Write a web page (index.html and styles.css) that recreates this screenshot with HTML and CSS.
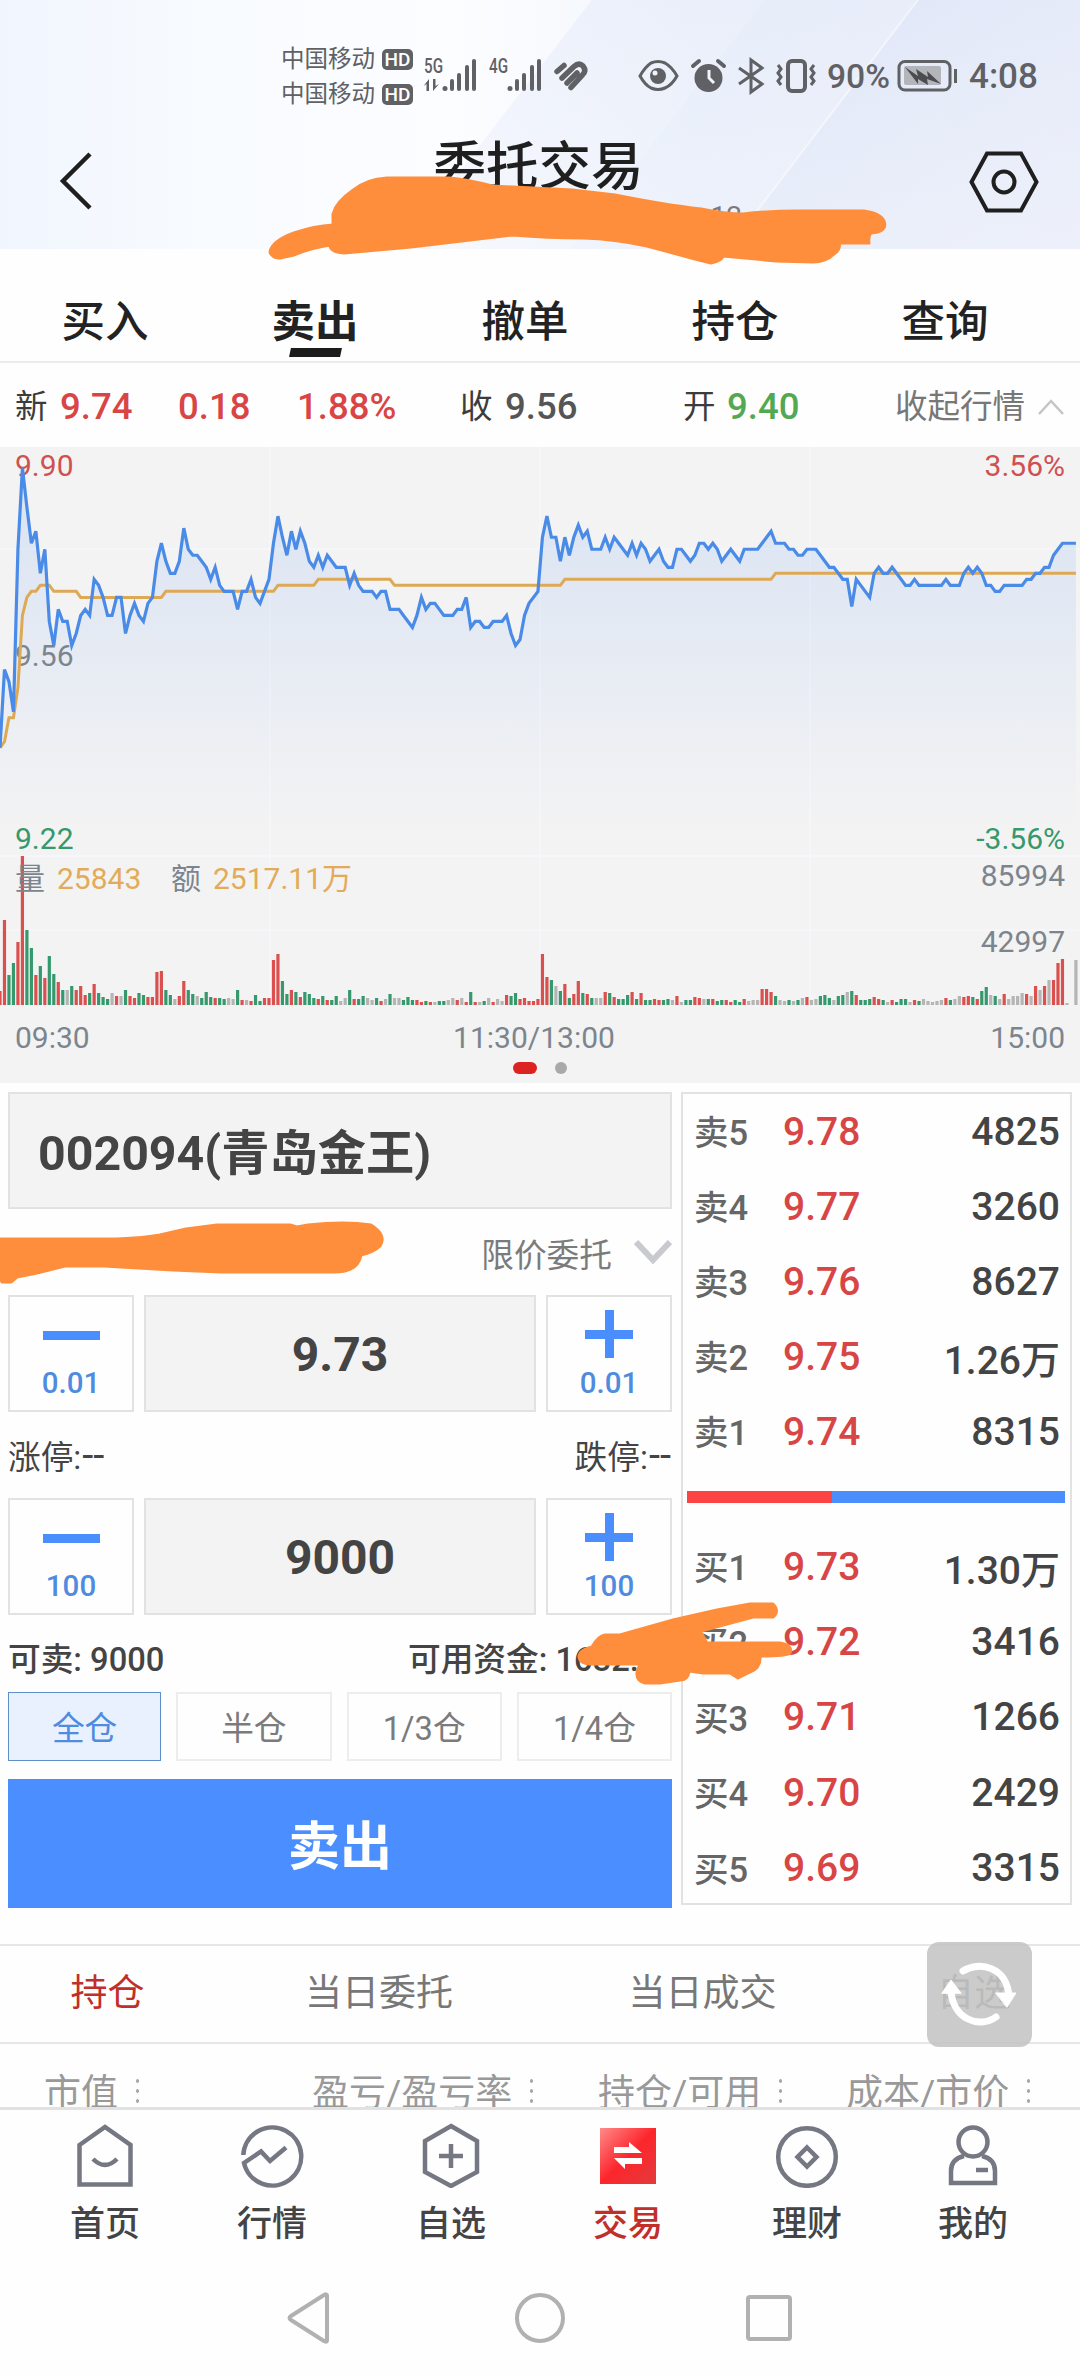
FILE: index.html
```html
<!DOCTYPE html>
<html lang="zh-CN">
<head>
  <meta charset="UTF-8">
  <meta name="viewport" content="width=device-width, initial-scale=1.0">
  <title>委托交易</title>
  <link rel="stylesheet" href="styles.css">
</head>
<body>
  <header class="header">
    <svg class="header-bg" viewBox="0 0 1080 249" preserveAspectRatio="none">
      <defs>
        <linearGradient id="sky" x1="0" y1="0" x2="1" y2="0">
          <stop offset="0" stop-color="#f1f6fe"/>
          <stop offset="0.2" stop-color="#f8fbff"/>
          <stop offset="0.42" stop-color="#fcfdff"/>
          <stop offset="0.65" stop-color="#f1f5fc"/>
          <stop offset="1" stop-color="#eef1fb"/>
        </linearGradient>
        <linearGradient id="beam" x1="0" y1="0" x2="1" y2="1">
          <stop offset="0" stop-color="#d5def6" stop-opacity="0.6"/>
          <stop offset="1" stop-color="#e6ebf9" stop-opacity="0.1"/>
        </linearGradient>
      </defs>
      <rect width="1080" height="249" fill="url(#sky)"/>
      <polygon points="592,0 1080,0 1080,249 400,249" fill="url(#beam)" opacity="0.6"/>
      <polygon points="765,0 1080,0 1080,249 570,249" fill="url(#beam)" opacity="0.3"/>
      <polygon points="918,0 1080,0 1080,249 728,249" fill="url(#beam)" opacity="0.9"/>
      <line x1="918" y1="0" x2="728" y2="249" stroke="#fff" stroke-width="2" opacity="0.5"/>
    </svg>

    <div class="status">
      <div class="carriers">
        <div class="carrier">中国移动<span class="hd">HD</span></div>
        <div class="carrier">中国移动<span class="hd">HD</span></div>
      </div>
      <svg class="status-icons" width="170" height="36" viewBox="422 58 170 36" fill="#5f6164">
        <text x="424" y="73" class="net" textLength="19" lengthAdjust="spacingAndGlyphs">5G</text>
        <path d="M429 79v12h-2.500v-7l-3 2zM433 91V79h2.500v7l3.500-2z"/>
        <g id="bars">
          <circle cx="445" cy="88.500" r="2.500"/>
          <rect x="450" y="79" width="4" height="12" rx="2"/>
          <rect x="457" y="73" width="4" height="18" rx="2"/>
          <rect x="465" y="65" width="4" height="26" rx="2"/>
          <rect x="472" y="59" width="4" height="32" rx="2"/>
        </g>
        <text x="489" y="73" class="net" textLength="19" lengthAdjust="spacingAndGlyphs">4G</text>
        <use href="#bars" x="65"/>
        <g stroke="#5f6164" stroke-width="5.500" stroke-linecap="round" stroke-linejoin="round" fill="none">
          <path d="M557 71.500L564 65.500M562 78L574 66.500Q579 62 583 66Q587 71 582 75.500L571 87.500M567 83L577 73"/>
        </g>
      </svg>
      <svg class="status-icons right" width="322" height="36" viewBox="637 58 322 36" fill="none" stroke="#5f6164" stroke-width="3">
        <path d="M640 76q5-9 11-13q7-3 14 0q7 4 12 13q-5 9-12 12q-7 3-14 0q-6-3-11-12z"/>
        <circle cx="658" cy="76" r="8" fill="#5f6164" stroke="none"/>
        <circle cx="655" cy="73" r="2.500" fill="#f1f4fb" stroke="none"/>
        <circle cx="708.500" cy="78" r="14" fill="#5f6164" stroke="none"/>
        <path d="M693 66l6-5M724 66l-6-5" stroke-width="4" stroke-linecap="round"/>
        <path d="M709 70v8l5 5" stroke="#f1f4fb"/>
        <path d="M739 68l23 16l-11 8V60l11 8l-23 16"/>
        <rect x="788" y="61" width="17" height="30" rx="4" stroke-width="4"/>
        <path d="M778 65l3 4l-3 4l3 4l-3 4l3 4M814 65l-3 4l3 4l-3 4l3 4l-3 4"/>
        <text x="827" y="88" class="battery-text" textLength="63" lengthAdjust="spacingAndGlyphs">90%</text>
        <rect x="899" y="61.500" width="51" height="28.500" rx="6"/>
        <rect x="904" y="66" width="37" height="19" rx="2" fill="#b3b5bb" stroke="none"/>
        <path d="M905 67l13 9l-2-7l12 8l-1-6l14 13l-14-5l1 6l-10-6l0 5z" fill="#4c4d50" stroke="none"/>
        <path d="M955.500 69v14"/>
      </svg>
      <span class="clock">4:08</span>
    </div>

    <div class="titlebar">
      <svg class="back" width="36" height="60" viewBox="0 0 36 60" fill="none" stroke="#1f1f1f" stroke-width="4.500">
        <path d="M32 3L5 30l27 27"/>
      </svg>
      <div class="title">
        <h1>委托交易</h1>
        <p>12</p>
      </div>
      <svg width="70" height="62" viewBox="0 0 70 62" fill="none" stroke="#1f1f1f" stroke-width="4">
        <path d="M18 2.500h34L67.500 31L52 59.500H18L2.500 31z"/>
        <circle cx="35" cy="31" r="10.500"/>
      </svg>
    </div>
  </header>

  <nav class="tabs">
    <a>买入</a>
    <a class="on">卖出</a>
    <a>撤单</a>
    <a>持仓</a>
    <a>查询</a>
  </nav>

  <section class="quote">
    <span>新</span><b class="red">9.74</b>
    <b class="red">0.18</b><b class="red">1.88%</b>
    <span>收</span><b>9.56</b>
    <span>开</span><b class="green">9.40</b>
    <span class="fold">收起行情</span>
    <svg width="26" height="16" viewBox="0 0 26 16" fill="none" stroke="#c4c4c4" stroke-width="2.500"><path d="M1 15L13 2l12 13"/></svg>
  </section>

  <section class="chart">
    <svg id="chart" width="1080" height="636" viewBox="0 447 1080 636">
      <defs>
        <linearGradient id="area" gradientUnits="userSpaceOnUse" x1="0" y1="480" x2="0" y2="830">
          <stop offset="0" stop-color="#4a8bf7" stop-opacity="0.15"/>
          <stop offset="1" stop-color="#4a8bf7" stop-opacity="0"/>
        </linearGradient>
      </defs>
      <path d="M270 447V1005M540 447V1005M810 447V1005M0 549H1080M0 856H1080M0 930H1080" stroke="#f5f6f9" stroke-width="2"/>
      <path id="fill" fill="url(#area)"/>
      <g id="volume"></g>
      <g class="axis">
        <text x="15" y="476" class="up">9.90</text>
        <text x="1065" y="476" class="up end">3.56%</text>
        <text x="15" y="666">9.56</text>
        <text x="15" y="849" class="down">9.22</text>
        <text x="1065" y="849" class="down end">-3.56%</text>
        <text x="15" y="889">量</text>
        <text x="57" y="889" class="amt">25843</text>
        <text x="171" y="889">额</text>
        <text x="213" y="889" class="amt">2517.11万</text>
        <text x="1065" y="886" class="end">85994</text>
        <text x="1065" y="952" class="end">42997</text>
        <text x="15" y="1048">09:30</text>
        <text x="534" y="1048" class="mid">11:30/13:00</text>
        <text x="1065" y="1048" class="end">15:00</text>
      </g>
      <polyline id="avg" fill="none" stroke="#dda954" stroke-width="3"/>
      <polyline id="price" fill="none" stroke="#4a8be8" stroke-width="3.200"/>
      <rect x="513" y="1062" width="24" height="12" rx="6" fill="#dd2222"/>
      <circle cx="561" cy="1068" r="6" fill="#a9a9a9"/>
    </svg>
  </section>

  <main class="trade">
    <div class="form">
      <div class="box stock">002094(青岛金王)</div>
      <div class="kind">
        <span>限价委托</span>
        <svg width="38" height="24" viewBox="0 0 38 24" fill="none" stroke="#c9cad0" stroke-width="6"><path d="M2 2l17 18L36 2"/></svg>
      </div>
      <div class="stepper">
        <button><i class="minus"></i>0.01</button>
        <div class="box">9.73</div>
        <button><i class="plus"></i>0.01</button>
      </div>
      <div class="line limits"><span>涨停:<u>--</u></span><span>跌停:<u>--</u></span></div>
      <div class="stepper">
        <button><i class="minus"></i>100</button>
        <div class="box">9000</div>
        <button><i class="plus"></i>100</button>
      </div>
      <div class="line funds"><span>可卖: 9000</span><span class="cash">可用资金: 1632.</span></div>
      <div class="quick">
        <button class="on">全仓</button>
        <button>半仓</button>
        <button>1/3仓</button>
        <button>1/4仓</button>
      </div>
      <button class="sell">卖出</button>
    </div>

    <div class="book">
      <div class="row"><span>卖5</span><b>9.78</b><em>4825</em></div>
      <div class="row"><span>卖4</span><b>9.77</b><em>3260</em></div>
      <div class="row"><span>卖3</span><b>9.76</b><em>8627</em></div>
      <div class="row"><span>卖2</span><b>9.75</b><em>1.26万</em></div>
      <div class="row"><span>卖1</span><b>9.74</b><em>8315</em></div>
      <div class="ratio"></div>
      <div class="row buy"><span>买1</span><b>9.73</b><em>1.30万</em></div>
      <div class="row buy"><span>买2</span><b>9.72</b><em>3416</em></div>
      <div class="row buy"><span>买3</span><b>9.71</b><em>1266</em></div>
      <div class="row buy"><span>买4</span><b>9.70</b><em>2429</em></div>
      <div class="row buy"><span>买5</span><b>9.69</b><em>3315</em></div>
    </div>
  </main>

  <section class="lists">
    <div class="subtabs">
      <span class="on">持仓</span><span>当日委托</span><span>当日成交</span><span>自选</span>
      <div class="refresh">
        <svg width="105" height="105" viewBox="0 0 105 105" fill="none" stroke="#fff" stroke-width="7" stroke-linecap="round">
          <path d="M36 29C52 19 80 24 82 55"/>
          <path d="M69 75C52 87 26 77 24 49"/>
          <path d="M69 51l20 0l-9 14zM15 51l9-13l10 13z" fill="#fff" stroke-width="1"/>
        </svg>
      </div>
    </div>
    <div class="cols">
      <span>市值<i></i></span><span>盈亏/盈亏率<i></i></span><span>持仓/可用<i></i></span><span>成本/市价<i></i></span>
    </div>
  </section>

  <nav class="bottom">
    <a>
      <svg width="64" height="66" viewBox="0 0 64 66"><path d="M6.500 23L32 5l25.500 18v39.500h-51zM20 37q12 12 24 0"/></svg>
      首页
    </a>
    <a>
      <svg width="64" height="66" viewBox="0 0 64 66"><path d="M3.300 33A29 29 0 1 1 4 41L21 29.500l9 9.500L46 25.500"/></svg>
      行情
    </a>
    <a>
      <svg width="64" height="66" viewBox="0 0 64 66"><path d="M32 4l26 15v31L32 64L6 50V19zM32 22v24M20 34h24"/></svg>
      自选
    </a>
    <a class="on">
      <svg width="64" height="66" viewBox="0 0 64 66">
        <defs><linearGradient id="deal" x1="0" y1="0" x2="1" y2="1"><stop offset="0" stop-color="#ff8a8a"/><stop offset="0.500" stop-color="#fc262c"/><stop offset="1" stop-color="#e23b3b"/></linearGradient></defs>
        <rect x="4" y="6" width="56" height="56" fill="url(#deal)" stroke="none"/>
        <path d="M18 25h15v-5l13 11H18zM46 36H18l11 11v-5h17z" fill="#fff" stroke="none"/>
      </svg>
      交易
    </a>
    <a>
      <svg width="64" height="66" viewBox="0 0 64 66"><circle cx="32" cy="35" r="28.800"/><path d="M32 25.500l9.500 9.500l-9.500 9.500l-9.500-9.500z"/></svg>
      理财
    </a>
    <a>
      <svg width="64" height="66" viewBox="0 0 64 66"><circle cx="32" cy="20" r="14.500"/><path d="M23 34Q10 37 10 49v12h44V49Q54 37 41 34M35 48h12"/></svg>
      我的
    </a>
  </nav>

  <div class="sysnav">
    <svg width="1080" height="60" viewBox="0 0 1080 60" fill="none" stroke="#b1b1b1" stroke-width="4" stroke-linejoin="round">
      <path d="M327 7.500v45q0 2-3 0.500L291 32q-3-2 0-4L324 7q3-1.500 3 0.500z"/>
      <circle cx="540" cy="30" r="23"/>
      <rect x="748" y="9" width="42" height="42" rx="2"/>
    </svg>
  </div>

  <!-- marker strokes hiding account details -->
  <svg class="marker" width="1080" height="2376" viewBox="0 0 1080 2376">
    <path d="M270 252Q272 241 294 233Q314 226 333 225V214Q336 202 352 191Q366 179 387 178H449Q470 180 492 186L572 190L615 195Q665 205 701 209Q725 214 743 214Q770 211 797 211H864Q880 213 884 221Q888 232 871 233Q868 236 869 243H839Q841 249 834 254Q826 262 813 262L776 261L723 256Q722 261 711 263L695 259L647 246Q615 239 583 238Q547 238 513 235L411 247L344 253Q330 252 330 245Q310 248 294 255L280 258Q272 258 270 252z"/>
    <path d="M-4 1239L117 1239Q145 1238 160 1235L186 1229L217 1225H290L297 1227L308 1225Q345 1221 371 1225Q387 1235 380 1246Q374 1252 361 1255Q358 1272 334 1272H221L173 1270L104 1266H65L37 1273L17 1277L11 1282H2L-4 1270z"/>
    <path d="M579 1657Q579 1650 592 1647Q598 1636 605 1635H620L673 1620L717 1610L750 1604H773Q780 1611 773 1617H753L701 1631Q703 1637 707 1643H780Q793 1645 790 1653Q786 1656 760 1656Q761 1668 750 1672L738 1678L730 1673H703L689 1671Q688 1680 680 1680L660 1683H645Q636 1681 637 1672L640 1664H592Q580 1664 579 1657z"/>
  </svg>

  <script>
    const STEP = 4.483;   // px per minute
    const xAt = i => i * STEP;
    const yAt = c => 447 + (990 - c) * 6.015;

    // price per minute, in cents
    const prices = (
      '940 953 951 946 973 986.5 980 974 976 969 973 961 957 963 961 961 957 959 962 963 ' +
      '962 968 967 965 962 962 965 965 959 962 964 962 961 964 965 971 974 971 969 969 ' +
      '971 976.5 973 972 972 971 970 968 970 967 966 966 966 963 966 966 968 965 964 966 ' +
      '968 974 978.5 975 972 976 973 976 974 971 970 972 970 972 971 970 970 970 967 969 ' +
      '967 966 966 966 965 966 966 963 963 963 962 961 960 962 965 963 964 964 963 962 ' +
      '962 962 963 963 965 960 961 961 960 960 961 961 961 962 959 957 958 962 964 965 ' +
      '966 975 978.5 975 975 971 975 972 975 977 975 976 973 973 973 975 973 975 974 973 ' +
      '972 974 972 974 973 971 972 973 971 970 970 973 973 972 971 972 974 974 973 974 ' +
      '973 971 972 973 972 971 973 973 973 973 974 975 976 974 974 974 973 973 972 972 ' +
      '973 973 973 972 971 970 970 969 968 968 963.5 968 967 966 965 969 970 969 969 970 ' +
      '969 968 967 967 968 967 967 967 967 967 967 968 967 967 967 969 970 969 970 969 ' +
      '967 967 966 966 967 967 967 967 967 968 968 969 969 970 970 972 973 974 974 974 974'
    ).split(' ').map(Number);

    // average line: [minute, cents]
    const avg = [[0,940],[1,941],[2,945],[3,945],[4,950],[5,962],[6,965],[7,966],[8,966],[9,967],[11,967],
      [12,966],[17,966],[18,965],[36,965],[37,966],[61,966],[62,967],[70,967],[71,968],[87,968],
      [88,967],[125,967],[126,968],[172,968],[173,969],[240,969]];

    // volume bars: r up, g down, n flat + height
    const volume = (
      'r14 r85 g30 g42 r63 r149 g75 g57 r30 g39 r27 g49 g31 r23 g15 n15 g19 r15 r19 r10 ' +
      'g12 r21 g12 g8 g6 n12 r9 n9 g15 r9 r7 g12 g10 r8 r8 r33 r34 g15 g10 n6 ' +
      'r9 r24 g15 g11 n9 g7 g13 g8 r7 g7 g6 n7 n6 g15 r5 n5 r4 g10 g4 r7 ' +
      'r7 r45 r51 g24 g11 r15 g13 r8 g13 g11 g7 r6 g9 r5 g5 g9 n4 n7 g15 r6 ' +
      'g6 g9 n7 n5 g7 r4 n6 g11 n7 n7 g5 g8 g5 r5 r3 g4 r3 n3 g4 g4 ' +
      'n5 n7 r5 n7 r3 g13 r3 n3 g4 n7 r3 n6 n4 r10 g9 g12 r6 r7 r4 r4 ' +
      'r6 r51 r28 g25 n19 g14 r21 g7 r11 r24 g12 r11 g7 n7 n7 r13 g12 r8 g6 g6 ' +
      'g10 r13 g6 r12 g5 g5 r6 r5 g5 g6 n5 r9 n3 g5 g5 r8 r7 n6 g6 r6 ' +
      'g4 g5 r5 r3 g5 g3 r6 n4 n5 n5 r16 r16 r13 g9 n5 n4 g5 n4 g5 n7 ' +
      'r8 n5 n6 g9 g10 g7 n5 g9 g10 n13 g14 r10 g5 g5 g6 r8 r6 g5 n3 r5 ' +
      'g3 g6 g6 n3 r5 g4 n6 n4 n3 n4 n5 r7 g5 n6 n9 r8 r9 g8 r6 g14 ' +
      'g18 n10 g9 n6 r11 n6 n9 n9 n12 r11 n9 r19 n15 r19 n25 r25 r42 r46 n2 n0 n45'
    ).split(' ');

    const line = prices.map((c, i) => `${xAt(i)},${yAt(c)}`).join(' ');
    document.getElementById('price').setAttribute('points', line);
    document.getElementById('fill').setAttribute('d', `M0,856 L${line} L${xAt(240)},856 Z`);
    document.getElementById('avg').setAttribute('points', avg.map(p => `${xAt(p[0])},${yAt(p[1])}`).join(' '));

    const colors = { r: '#d9504f', g: '#35996d', n: '#b5b5b5' };
    document.getElementById('volume').innerHTML = volume.map((v, i) => {
      const h = +v.slice(1);
      return `<rect x="${xAt(i) - 1.6}" y="${1005 - h}" width="3.2" height="${h}" fill="${colors[v[0]]}"/>`;
    }).join('');
  </script>
</body>
</html>
```

FILE: styles.css
```css
* {
  box-sizing: border-box;
}

body {
  margin: 0;
  width: 1080px;
  height: 2376px;
  position: relative;
  overflow: hidden;
  background: #fefefe;
  color: #444;
  font-family: Roboto, "Noto Sans CJK SC", sans-serif;
}

button {
  font-family: inherit;
  background: #fefefe;
  padding: 0;
  margin: 0;
}

/* header */
.header {
  position: relative;
  height: 249px;
}

.header-bg {
  position: absolute;
  left: 0;
  top: 0;
  width: 100%;
  height: 100%;
}

.status {
  position: relative;
  display: flex;
  align-items: center;
  height: 117px;
  padding: 36px 0 0 281px;
  color: #5f6164;
}

.carriers {
  width: 141px;
}

.carrier {
  display: flex;
  align-items: center;
  height: 35px;
  font-size: 23.5px;
  line-height: 35px;
}

.hd {
  margin-left: 7px;
  width: 31px;
  height: 21px;
  border-radius: 5px;
  background: #5f6164;
  color: #fff;
  font-size: 19px;
  font-weight: 500;
  line-height: 21px;
  text-align: center;
}

.status-icons {
  margin-top: -1px;
  overflow: visible;
}

.status-icons.right {
  margin-left: 45px;
}

.net {
  font-size: 20px;
  font-weight: 500;
}

.battery-text {
  font-size: 34px;
  font-weight: 500;
  fill: #5f6164;
  stroke: none;
}

.clock {
  margin-left: 10px;
  font-size: 35px;
  font-weight: 500;
  line-height: 36px;
}

.titlebar {
  position: relative;
  display: flex;
  justify-content: space-between;
  align-items: flex-start;
  height: 132px;
  padding: 34px 41px 0 58px;
}

.title {
  margin-top: -21px;
  width: 540px;
  padding-left: 14px;
}

.title h1 {
  margin: 0;
  text-align: center;
  font-size: 52.5px;
  font-weight: 500;
  line-height: 74px;
  color: #1f1f1f;
}

.title p {
  margin: -4px 0 0;
  padding-left: 435px;
  font-size: 28px;
  line-height: 34px;
  color: #777b85;
}

/* tabs */
.tabs {
  display: flex;
  height: 114px;
  padding-right: 30px;
  border-bottom: 2px solid #ececec;
}

.tabs a {
  flex: 1;
  display: flex;
  flex-direction: column;
  align-items: center;
  padding-top: 44px;
  font-size: 43.5px;
  font-weight: 500;
  line-height: 60px;
  color: #222;
}

.tabs .on {
  font-weight: 700;
}

.tabs .on::after {
  content: "";
  width: 51px;
  height: 9px;
  margin-top: -5px;
  background: #1c1c1c;
  transform: skewX(-12deg);
}

/* quote */
.quote {
  display: grid;
  grid-template-columns: 45px 118px 119px 163px 45px 178px 44px 168px 143px 30px;
  align-items: center;
  height: 84px;
  padding: 4px 0 0 15px;
  font-size: 32.5px;
  line-height: 44px;
  color: #3c3c3c;
}

.quote b {
  font-size: 36.5px;
  font-weight: 500;
  color: #555;
}

.quote .red {
  color: #d94545;
}

.quote .green {
  color: #52a853;
}

.quote .fold {
  color: #777;
  white-space: nowrap;
}

.chart {
  height: 636px;
  background: #f3f3f3;
}

.chart svg {
  display: block;
}

.axis text {
  font-size: 30px;
  fill: #7c858e;
}

.axis .up { fill: #d05050; }
.axis .down { fill: #35996d; }
.axis .amt { fill: #e2ab5a; }
.axis .end { text-anchor: end; }
.axis .mid { text-anchor: middle; }

/* order form */
.trade {
  display: flex;
  align-items: flex-start;
  gap: 9px;
  padding: 9px 8px 0;
  height: 861px;
}

.form {
  width: 664px;
}

.box {
  height: 117px;
  border: 2px solid #e2e2e2;
  background: #f3f3f3;
  font-size: 48px;
  font-weight: 700;
  line-height: 115px;
  text-align: center;
}

.stock {
  padding-left: 28px;
  text-align: left;
  font-size: 48.3px;
  line-height: 119px;
}

.kind {
  display: flex;
  justify-content: flex-end;
  align-items: center;
  gap: 22px;
  height: 86px;
  font-size: 32.7px;
  color: #7b7b7b;
}

.stepper {
  display: grid;
  grid-template-columns: 126px 392px 126px;
  gap: 10px;
}

.stepper button {
  display: flex;
  flex-direction: column;
  align-items: center;
  height: 117px;
  border: 2px solid #e2e2e2;
  color: #4f8bdf;
  font-size: 29.5px;
  font-weight: 500;
  line-height: 36px;
}

.minus {
  width: 57px;
  height: 9px;
  margin: 34px 0 25px;
  background: #4a8dfd;
}

.plus {
  width: 48px;
  height: 48px;
  margin: 13px 0 7px;
  background:
    linear-gradient(#4a8dfd, #4a8dfd) center / 9px 48px no-repeat,
    linear-gradient(#4a8dfd, #4a8dfd) center / 48px 9px no-repeat;
}

.line {
  display: flex;
  justify-content: space-between;
  font-size: 32.7px;
  padding-right: 1px;
}

.limits {
  height: 86px;
  line-height: 92px;
}

.limits u {
  text-decoration: none;
  font-size: 40px;
  line-height: 1;
  margin-left: 1px;
}

.funds {
  height: 77px;
  line-height: 91px;
  font-weight: 500;
}

.funds span {
  white-space: nowrap;
}

.cash {
  width: 263px;
}

.quick {
  display: flex;
  gap: 15px;
}

.quick button {
  flex: 1;
  height: 69px;
  padding-bottom: 2px;
  border: 2px solid #ededed;
  font-size: 32.7px;
  font-weight: 400;
  color: #7b7b7b;
}

.quick .on {
  border: 1px solid #5d8fc9;
  background: #eaf1fe;
  color: #4f8bdf;
}

.sell {
  display: block;
  width: 664px;
  height: 129px;
  margin-top: 18px;
  padding-bottom: 2px;
  border: 0;
  background: #4a8eff;
  color: #fff;
  font-size: 52px;
  font-weight: 700;
}

/* order book */
.book {
  width: 391px;
  height: 813px;
  padding: 0 10px 0 11px;
  border: 2px solid #e2e2e2;
}

.row {
  display: grid;
  grid-template-columns: 89px 1fr auto;
  align-items: center;
  height: 75px;
  font-size: 39px;
  font-weight: 500;
}

.row.buy {
  height: 75.4px;
}

.row span {
  padding-bottom: 3px;
  font-size: 34.5px;
  color: #666;
}

.row b {
  font-weight: 500;
  color: #d84545;
}

.row em {
  font-style: normal;
}

.ratio {
  width: 378px;
  height: 12px;
  margin: 22px 0 26px -7px;
  background: linear-gradient(90deg, #fd4444 145px, #4a8dfd 145px);
}

/* lists */
.lists {
  height: 163px;
  font-size: 37px;
}

.subtabs {
  position: relative;
  display: grid;
  grid-template-columns: 215px 328px 319px 224px;
  height: 100px;
  border-top: 2px solid #e6e6e6;
  border-bottom: 2px solid #e6e6e6;
  line-height: 96px;
  text-align: center;
  color: #777;
}

.subtabs .on {
  color: #c12f2b;
}

.refresh {
  position: absolute;
  left: 927px;
  top: -4px;
  width: 105px;
  height: 105px;
  border-radius: 12px;
  background: rgba(196, 196, 196, 0.88);
}

.refresh svg {
  display: block;
}

.cols {
  display: grid;
  grid-template-columns: 268px 286px 248px 233px;
  height: 63px;
  overflow: hidden;
  padding-left: 44px;
  line-height: 100px;
  color: #999;
}

.cols span {
  display: flex;
  align-items: flex-start;
  white-space: nowrap;
}

.cols i {
  width: 3px;
  height: 30px;
  margin: 32px 0 0 18px;
  background: radial-gradient(circle, #aaa 1.5px, transparent 2px) 0 0 / 3px 10px;
}

/* bottom nav */
.bottom {
  display: grid;
  grid-template-columns: 178px 156px 202px 152px 206px 126px;
  height: 166px;
  padding: 12px 0 0 16px;
  border-top: 3px solid #e2e2e2;
}

.bottom a {
  display: flex;
  flex-direction: column;
  align-items: center;
  font-size: 35px;
  font-weight: 500;
  line-height: 73px;
}

.bottom svg {
  flex: none;
  fill: none;
  stroke: #757883;
  stroke-width: 4.5;
}

.bottom .on {
  color: #c12f2b;
}

.sysnav {
  padding-top: 15px;
}

.marker {
  position: absolute;
  left: 0;
  top: 0;
  fill: #ff8e3c;
  stroke: #ff8e3c;
  stroke-width: 3;
  stroke-linejoin: round;
  pointer-events: none;
}
```
